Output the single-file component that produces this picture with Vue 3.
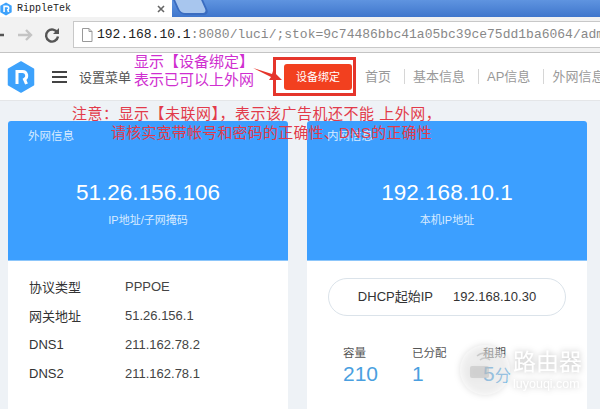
<template>
  <div class="page">
    <div class="tabstrip">
      <div class="tab">
        <svg class="favicon" viewBox="0 0 16 16"><path d="M8 0.5 14.5 4.2V11.8L8 15.5 1.5 11.8V4.2Z" fill="#3da2fc"/><path d="M5.8 11.5V5H9a2 2 0 0 1 1 3.8L11 11.5" fill="none" stroke="#fff" stroke-width="1.8"/></svg>
        <span class="tab-title">RippleTek</span>
        <svg class="tab-close" viewBox="0 0 8 8" width="8" height="8"><path d="M1 1 7 7M7 1 1 7" fill="none" stroke="#666" stroke-width="1.6"/></svg>
      </div>
      <div class="tab-new"></div>
    </div>
    <div class="toolbar">
      <svg class="nav-icon" viewBox="0 0 18 18" width="18" height="18"><path d="M15 9H2M7 4 2 9l5 5" fill="none" stroke="#555" stroke-width="2.4"/></svg>
      <svg class="nav-icon" viewBox="0 0 18 18" width="18" height="18"><path d="M2 9H15M10 4l5 5-5 5" fill="none" stroke="#c4c4c4" stroke-width="2.4"/></svg>
      <svg class="nav-icon" viewBox="0 0 18 18" width="18" height="18"><path d="M14.500 7A6 6 0 1 0 15 10.500" fill="none" stroke="#555" stroke-width="2.400"/><path d="M16 2v6h-6z" fill="#555"/></svg>
      <div class="address">
        <svg class="page-icon" viewBox="0 0 12 14" width="12" height="14"><path d="M1.500 .5H8L11 3.500V13.500H1.500Z" fill="#fff" stroke="#999"/><path d="M8 .5V3.500H11" fill="none" stroke="#999"/></svg>
        <span class="url"><b>192.168.10.1</b>:8080/luci/;stok=9c74486bbc41a05bc39ce75dd1ba6064/adm</span>
      </div>
    </div>
    <header class="topbar">
      <svg class="logo" viewBox="0 0 28 32" width="28" height="32"><path d="M14 1 26.500 8.200V23.800L14 31 1.500 23.800V8.200Z" fill="#3da2fc" stroke="#3da2fc" stroke-width="1.500" stroke-linejoin="round"/><path d="M10 23V10.500H15.500a4.200 4.200 0 0 1 2 7.900L19.500 23" fill="none" stroke="#fff" stroke-width="3"/></svg>
      <span class="burger"><i></i><i></i><i></i></span>
      <span class="menu-label">设置菜单</span>
      <div class="bind-frame"><span class="bind-btn">设备绑定</span></div>
      <nav class="nav">
        <a>首页</a><a>基本信息</a><a>AP信息</a><a>外网信息</a>
      </nav>
      <div class="callout">显示【设备绑定】<br>表示已可以上外网</div>
      <svg class="arrow" viewBox="0 0 30 20" width="30" height="20"><path d="M0 2 19 8 20 5 29 14 16 14 18 11Z" fill="#e5352b"/></svg>
    </header>
    <main class="content">
      <section class="card">
        <div class="hero">
          <div class="hero-label">外网信息</div>
          <div class="hero-ip">51.26.156.106</div>
          <div class="hero-sub">IP地址/子网掩码</div>
        </div>
        <dl class="info">
          <template v-for="row in wanRows" :key="row[0]">
            <dt>{{ row[0] }}</dt>
            <dd>{{ row[1] }}</dd>
          </template>
        </dl>
      </section>
      <section class="card">
        <div class="hero">
          <div class="hero-label">内网信息</div>
          <div class="hero-ip">192.168.10.1</div>
          <div class="hero-sub">本机IP地址</div>
        </div>
        <div class="lan">
          <div class="pill"><span>DHCP起始IP</span><span>192.168.10.30</span></div>
          <div class="stats">
            <div v-for="s in stats" :key="s[0]" class="stat">
              <div class="stat-label">{{ s[0] }}</div>
              <div class="stat-value">{{ s[1] }}<small v-if="s[2]">{{ s[2] }}</small></div>
            </div>
          </div>
        </div>
      </section>
      <div class="notice">
        <div class="notice-one">注意：显示【未联网】，表示该广告机还不能 上外网，</div>
        <div class="notice-two">请核实宽带帐号和密码的正确性、DNS的正确性</div>
      </div>
    </main>
    <div class="watermark">
      <svg viewBox="0 0 50 50" width="50" height="50">
        <circle cx="25" cy="25" r="25" fill="#fff" fill-opacity=".45"/>
        <rect x="10" y="21" width="19" height="12" rx="2" fill="#bbb" fill-opacity=".5"/>
        <path d="M20 15a7 7 0 0 1 10 0M17 11a12 12 0 0 1 16 0" fill="none" stroke="#bbb" stroke-opacity=".7" stroke-width="1.500"/>
      </svg>
      <div class="wm-text">
        <div class="wm-cn">路由器</div>
        <div class="wm-en">luyouqi.com</div>
      </div>
    </div>
  </div>
</template>

<script setup>
const wanRows = [
  ['协议类型', 'PPPOE'],
  ['网关地址', '51.26.156.1'],
  ['DNS1', '211.162.78.2'],
  ['DNS2', '211.162.78.1']
]

const stats = [
  ['容量', '210'],
  ['已分配', '1'],
  ['租期', '5', '分']
]
</script>

<style>
html, body {
  margin: 0;
  overflow: hidden;
}
</style>

<style scoped>
.page {
  position: relative;
  width: 600px;
  height: 409px;
  overflow: hidden;
  background: #eef2f6;
  font-family: "Liberation Sans", "Noto Sans CJK SC", sans-serif;
}

.tabstrip {
  display: flex;
  height: 17px;
  overflow: hidden;
  background: linear-gradient(#5f94e0, #3f76cc);
}

.tab {
  display: flex;
  align-items: center;
  flex-shrink: 0;
  width: 172px;
  height: 17px;
  background: #fff;
}

.favicon {
  width: 14px;
  height: 14px;
  margin: 0 4px 0 -1px;
}

.tab-title {
  flex: 1;
  font-family: "Liberation Mono", monospace;
  font-size: 10px;
  color: #222;
}

.tab-close {
  margin-right: 7px;
}

.tab-new {
  width: 26px;
  height: 13px;
  background: #a8c6ee;
  border-radius: 0 0 4px 4px;
  box-shadow: 0 0 0 2px #3a6cc0;
  transform: skewX(24deg);
  margin-left: 6px;
}

.toolbar {
  display: flex;
  align-items: center;
  gap: 9px;
  height: 36px;
  background: #f2f2f2;
  border-bottom: 1px solid #c4c4c4;
  box-sizing: border-box;
}

.nav-icon {
  flex-shrink: 0;
}

.nav-icon:first-child {
  margin-left: -11px;
}

.address {
  display: flex;
  align-items: center;
  gap: 4px;
  flex: 1;
  height: 25px;
  margin-left: 3px;
  padding-left: 7px;
  background: #fff;
  border: 1px solid #c8c8c8;
  border-right: 0;
  overflow: hidden;
}

.page-icon {
  flex-shrink: 0;
}

.url {
  font-family: "Liberation Mono", monospace;
  font-size: 13px;
  color: #888;
  white-space: nowrap;
}

.url b {
  font-weight: normal;
  color: #222;
}

.topbar {
  position: relative;
  display: flex;
  align-items: center;
  height: 48px;
  background: #fff;
  border-bottom: 1px solid #e4e6e8;
  box-sizing: border-box;
}

.logo {
  margin-left: 7px;
  flex-shrink: 0;
}

.burger {
  display: flex;
  flex-direction: column;
  flex-shrink: 0;
  gap: 3px;
  width: 15px;
  margin-left: 17px;
}

.burger i {
  height: 2px;
  background: #444;
}

.menu-label {
  flex-shrink: 0;
  width: 58px;
  margin-left: 12px;
  font-size: 13px;
  color: #555;
  white-space: nowrap;
}

.bind-frame {
  display: flex;
  align-items: center;
  width: 83px;
  height: 39px;
  margin-left: 136px;
  padding-left: 8px;
  border: 3px solid #e5352b;
  box-sizing: border-box;
  flex-shrink: 0;
}

.bind-btn {
  width: 68px;
  height: 26px;
  line-height: 26px;
  text-align: center;
  background: #f2401f;
  border-radius: 3px;
  color: #fff;
  font-size: 11px;
}

.nav {
  display: flex;
  flex-shrink: 0;
  margin-left: 9px;
  white-space: nowrap;
}

.nav a {
  padding: 0 13px 0 8px;
  font-size: 13px;
  line-height: 15px;
  color: #999;
  border-left: 1px solid #d6d6d6;
}

.nav a:first-child {
  padding-left: 0;
  border-left: 0;
}

.callout {
  position: absolute;
  left: 134px;
  top: 0;
  font-size: 15px;
  line-height: 18px;
  color: #cf2fd0;
}

.arrow {
  position: absolute;
  left: 253px;
  top: 13px;
}

.content {
  position: relative;
  display: grid;
  grid-template-columns: 280px 280px;
  gap: 19px;
  padding: 20px 0 0 8px;
}

.card {
  height: 310px;
  background: #fff;
  border-radius: 3px 3px 0 0;
  overflow: hidden;
}

.hero {
  height: 140px;
  padding-top: 8px;
  box-sizing: border-box;
  background: #3c9fff;
  border-bottom: 1px solid #8cc6fb;
  color: #fff;
  text-align: center;
}

.hero-label {
  padding-left: 20px;
  text-align: left;
  font-size: 11.500px;
  line-height: 15px;
  color: #d8ebff;
}

.hero-ip {
  margin-top: 36px;
  font-size: 22.500px;
  line-height: 26px;
}

.hero-sub {
  margin-top: 7px;
  font-size: 11px;
  line-height: 15px;
  color: #d8ebff;
}

.info {
  display: grid;
  grid-template-columns: 96px 1fr;
  grid-auto-rows: 29px;
  align-items: center;
  margin: 0;
  padding: 11px 0 0 21px;
  font-size: 13px;
  color: #333;
}

.info dd {
  margin: 0;
  color: #444;
}

.lan {
  padding: 17px 21px 0;
}

.pill {
  display: flex;
  justify-content: center;
  gap: 20px;
  height: 38px;
  line-height: 36px;
  box-sizing: border-box;
  width: 238px;
  border: 1px solid #dbe3ea;
  border-radius: 19px;
  font-size: 13px;
  color: #333;
}

.stats {
  display: grid;
  grid-template-columns: 69px 71px 1fr;
  margin-top: 30px;
  padding-left: 15px;
}

.stat-label {
  font-size: 11.500px;
  line-height: 14px;
  color: #555;
}

.stat-value {
  margin-top: 2px;
  font-size: 21px;
  line-height: 24px;
  color: #4a9fe0;
}

.stat-value small {
  font-size: 16px;
}

.notice {
  position: absolute;
  top: 3px;
  left: 0;
  width: 600px;
  font-size: 15px;
  line-height: 19px;
  color: #e23a4a;
  white-space: nowrap;
}

.notice-one {
  padding-left: 72px;
  letter-spacing: 0.5px;
}

.notice-two {
  padding-left: 111px;
  letter-spacing: 0.2px;
}

.watermark {
  position: absolute;
  left: 460px;
  top: 345px;
  display: flex;
  align-items: center;
  gap: 3px;
  filter: drop-shadow(0 0 3px rgba(0, 0, 0, 0.28));
}

.wm-text {
  color: #fff;
}

.wm-cn {
  font-size: 23px;
  line-height: 29px;
}

.wm-en {
  font-size: 12.500px;
  line-height: 15px;
}
</style>
